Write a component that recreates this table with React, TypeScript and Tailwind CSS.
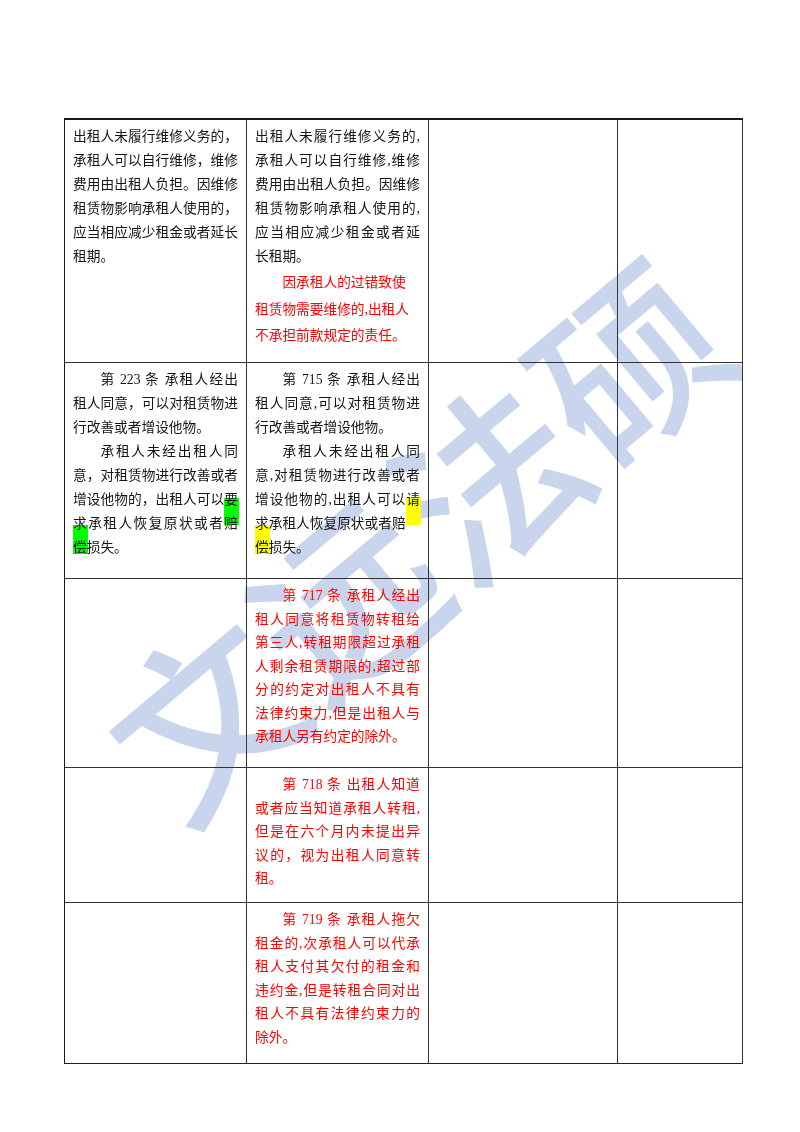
import React from "react";

type LProps = { children: React.ReactNode; j?: boolean; indent?: boolean };

const L = ({ children, j = true, indent = false }: LProps) => (
  <div
    className={`${j ? "text-justify [text-align-last:justify]" : ""} ${
      indent ? "indent-[2em]" : ""
    } whitespace-pre`}
  >
    {children}
  </div>
);

const HlTop = ({ ch, green }: { ch: string; green: boolean }) => (
  <span className="relative inline-block">
    <span
      className={`absolute left-0 right-[-1px] top-[10px] h-[27px] mix-blend-multiply ${
        green ? "bg-[#00ff00]" : "bg-[#ffff00]"
      }`}
    />
    {ch}
  </span>
);

const HlBottom = ({ ch, green }: { ch: string; green: boolean }) => (
  <span className="relative inline-block">
    <span
      className={`absolute left-0 right-[-1px] top-[-11px] h-[29px] mix-blend-multiply ${
        green ? "bg-[#00ff00]" : "bg-[#ffff00]"
      }`}
    />
    {ch}
  </span>
);

const Cell = ({
  children,
  red = false,
  lh = "b",
}: {
  children?: React.ReactNode;
  red?: boolean;
  lh?: "b" | "r";
}) => (
  <div
    className={`border-r border-[#333] pl-2 pr-2 pt-[5px] ${
      red ? "text-[#ff0000]" : "text-[#151515]"
    } ${lh === "b" ? "leading-[24px]" : "leading-[23.5px]"}`}
  >
    {children}
  </div>
);

export default function App() {
  return (
    <div className="relative w-[800px] h-[1132px] bg-white overflow-hidden [font-family:'Liberation_Serif','Noto_Sans_CJK_SC',serif] text-[13.7px]">
      {/* watermark */}
      <div className="pointer-events-none absolute left-[412px] top-[534px] z-0 -translate-x-1/2 -translate-y-1/2 -rotate-[40deg] whitespace-nowrap [font-family:'Noto_Sans_CJK_SC',sans-serif] text-[184px] leading-none font-medium text-[#c8d5ed]">
        文远法硕
      </div>

      <div className="relative z-10 pt-[118px] pl-[64px]">
        <div className="w-[679px] border-t-2 border-l border-[#1a1a1a]">
          {/* Row 1 */}
          <div className="grid grid-cols-[182px_182px_189px_125px] h-[243px] border-b border-[#333]">
            <Cell>
              <L>出租人未履行维修义务的，</L>
              <L>承租人可以自行维修，维修</L>
              <L>费用由出租人负担。因维修</L>
              <L>租赁物影响承租人使用的，</L>
              <L>应当相应减少租金或者延长</L>
              <L j={false}>租期。</L>
            </Cell>
            <Cell>
              <L>出租人未履行维修义务的,</L>
              <L>承租人可以自行维修,维修</L>
              <L>费用由出租人负担。因维修</L>
              <L>租赁物影响承租人使用的,</L>
              <L>应当相应减少租金或者延</L>
              <L j={false}>长租期。</L>
              <div className="text-[#ff0000] leading-[26.7px] pt-[1px]">
                <L j={false} indent>
                  因承租人的过错致使
                </L>
                <L j={false}>租赁物需要维修的,出租人</L>
                <L j={false}>不承担前款规定的责任。</L>
              </div>
            </Cell>
            <Cell />
            <Cell />
          </div>

          {/* Row 2 */}
          <div className="grid grid-cols-[182px_182px_189px_125px] h-[216px] border-b border-[#333]">
            <Cell>
              <L indent>第 223 条 承租人经出</L>
              <L>租人同意，可以对租赁物进</L>
              <L j={false}>行改善或者增设他物。</L>
              <L indent>承租人未经出租人同</L>
              <L>意，对租赁物进行改善或者</L>
              <L>
                增设他物的，出租人可以
                <HlTop ch="要" green />
              </L>
              <L>求承租人恢复原状或者赔</L>
              <L j={false}>
                <HlBottom ch="偿" green />
                损失。
              </L>
            </Cell>
            <Cell>
              <L indent>第 715 条 承租人经出</L>
              <L>租人同意,可以对租赁物进</L>
              <L j={false}>行改善或者增设他物。</L>
              <L indent>承租人未经出租人同</L>
              <L>意,对租赁物进行改善或者</L>
              <L>
                增设他物的,出租人可以
                <HlTop ch="请" green={false} />
              </L>
              <L j={false}>求承租人恢复原状或者赔</L>
              <L j={false}>
                <HlBottom ch="偿" green={false} />
                损失。
              </L>
            </Cell>
            <Cell />
            <Cell />
          </div>

          {/* Row 3 */}
          <div className="grid grid-cols-[182px_182px_189px_125px] h-[189px] border-b border-[#333]">
            <Cell />
            <Cell red lh="r">
              <L indent>第 717 条 承租人经出</L>
              <L>租人同意将租赁物转租给</L>
              <L>第三人,转租期限超过承租</L>
              <L>人剩余租赁期限的,超过部</L>
              <L>分的约定对出租人不具有</L>
              <L>法律约束力,但是出租人与</L>
              <L j={false}>承租人另有约定的除外。</L>
            </Cell>
            <Cell />
            <Cell />
          </div>

          {/* Row 4 */}
          <div className="grid grid-cols-[182px_182px_189px_125px] h-[135px] border-b border-[#333]">
            <Cell />
            <Cell red lh="r">
              <L indent>第 718 条 出租人知道</L>
              <L>或者应当知道承租人转租,</L>
              <L>但是在六个月内未提出异</L>
              <L>议的，视为出租人同意转</L>
              <L j={false}>租。</L>
            </Cell>
            <Cell />
            <Cell />
          </div>

          {/* Row 5 */}
          <div className="grid grid-cols-[182px_182px_189px_125px] h-[161px] border-b-[1.5px] border-[#222]">
            <Cell />
            <Cell red lh="r">
              <L indent>第 719 条 承租人拖欠</L>
              <L>租金的,次承租人可以代承</L>
              <L>租人支付其欠付的租金和</L>
              <L>违约金,但是转租合同对出</L>
              <L>租人不具有法律约束力的</L>
              <L j={false}>除外。</L>
            </Cell>
            <Cell />
            <Cell />
          </div>
        </div>
      </div>
    </div>
  );
}
